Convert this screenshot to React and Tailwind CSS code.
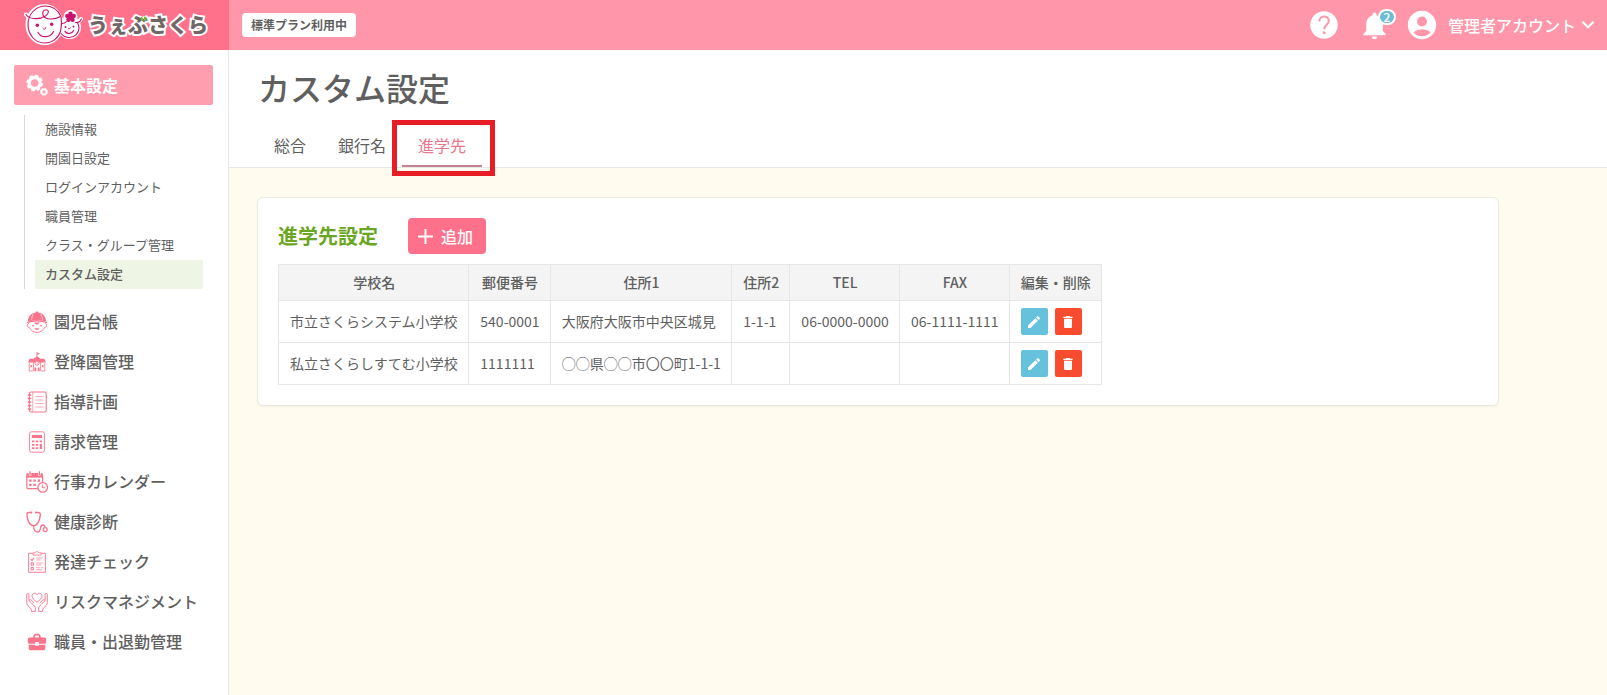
import { MdAccountCircle, MdBusinessCenter, MdDelete, MdEdit, MdNotifications } from "react-icons/md";

const subLinks = [
    { title: "施設情報" },
    { title: "開園日設定" },
    { title: "ログインアカウント" },
    { title: "職員管理" },
    { title: "クラス・グループ管理" },
    { title: "カスタム設定", active: true },
];

const menuLinks = [
    { title: "園児台帳", Icon: ChildIcon },
    { title: "登降園管理", Icon: SchoolIcon },
    { title: "指導計画", Icon: NotebookIcon },
    { title: "請求管理", Icon: CalculatorIcon },
    { title: "行事カレンダー", Icon: CalendarIcon },
    { title: "健康診断", Icon: StethoscopeIcon },
    { title: "発達チェック", Icon: ChecklistIcon },
    { title: "リスクマネジメント", Icon: HandsIcon },
    { title: "職員・出退勤管理", Icon: BriefcaseIcon },
];

const tabs = [
    { title: "総合" },
    { title: "銀行名" },
    { title: "進学先", active: true },
];

const columns = ["学校名", "郵便番号", "住所1", "住所2", "TEL", "FAX", "編集・削除"];

const schools = [
    ["市立さくらシステム小学校", "540-0001", "大阪府大阪市中央区城見", "1-1-1", "06-0000-0000", "06-1111-1111"],
    ["私立さくらしすてむ小学校", "1111111", "◯◯県◯◯市〇〇町1-1-1", "", "", ""],
];

function MenuSvg({ children }) {
    return (
        <svg viewBox="0 0 22 22" className="h-[22px] w-[22px] shrink-0" fill="none" stroke="currentColor" aria-hidden="true">
            {children}
        </svg>
    );
}

function GearsIcon() {
    return (
        <MenuSvg>
            <circle cx="8.7" cy="9" r="5.5" strokeWidth="3.4" />
            <circle cx="8.7" cy="9" r="7.3" strokeWidth="2" strokeDasharray="3.4 2.33" />
            <circle cx="18" cy="17.8" r="2.5" strokeWidth="1.8" />
            <circle cx="18" cy="17.8" r="3.5" strokeWidth="1" strokeDasharray="1.6 1.15" />
        </MenuSvg>
    );
}

function ChildIcon() {
    return (
        <MenuSvg>
            <path d="M2 10.5C2 5 5.8 1.6 11 1.6s9 3.4 9 8.9c-5-1.4-13-1.4-18 0z" fill="currentColor" stroke="none" />
            <path d="M9.7 0.6h2.6v1.6H9.7z" fill="currentColor" stroke="none" />
            <path d="M7.5 2.8C6 5 5.6 7 5.6 9.3M14.5 2.8C16 5 16.4 7 16.4 9.3" stroke="#fff" strokeWidth="0.6" />
            <path d="M0.8 11.6c5.5-2.4 14.9-2.4 20.4 0" strokeWidth="1.3" />
            <path d="M3 12.6c-2.2-.2-2.4 3.8.3 3.7C4.8 19.5 7.5 21.4 11 21.4s6.2-1.9 7.7-5.1c2.7.1 2.5-3.9.3-3.7" strokeWidth="0.9" />
            <path d="M8 11.5h6l-2 2h-2z" fill="currentColor" stroke="none" />
            <circle cx="7" cy="14.6" r="0.9" fill="currentColor" stroke="none" />
            <circle cx="15" cy="14.6" r="0.9" fill="currentColor" stroke="none" />
            <path d="M8.6 17.3h4.8c-.6 2.2-4.2 2.2-4.8 0z" fill="currentColor" stroke="none" />
        </MenuSvg>
    );
}

function SchoolIcon() {
    return (
        <MenuSvg>
            <path d="M10.9 7V1.5" strokeWidth="0.9" />
            <path d="M11.2 1.6l3 1-3 1.3z" fill="currentColor" stroke="none" />
            <path d="M2 11.4l1.6-3.6h3.9L11 5.2l3.5 2.6h3.9l1.6 3.6z" fill="currentColor" stroke="none" />
            <path d="M3.2 12v8h3.6M18.8 12v8h-3.6M7.4 11v9.2M14.6 11v9.2" strokeWidth="0.8" />
            <circle cx="11" cy="12.2" r="2.1" fill="#fff" strokeWidth="0.9" />
            <path d="M11 11.2v1.2h.9" strokeWidth="0.6" />
            <path d="M8.4 16.4h1.9v3.8H8.4zM11.7 16.4h1.9v3.8h-1.9zM4.4 14h1.5v2.2H4.4zM16.1 14h1.5v2.2h-1.5z" fill="currentColor" stroke="none" />
        </MenuSvg>
    );
}

function NotebookIcon() {
    return (
        <MenuSvg>
            <rect x="3.4" y="1" width="16.8" height="20" rx="1.8" strokeWidth="1.1" />
            <path d="M6.7 1v20" strokeWidth="0.6" />
            <path d="M1.8 4h3.4M1.8 7.5h3.4M1.8 11h3.4M1.8 14.5h3.4M1.8 18h3.4" strokeWidth="1.3" />
            <path d="M9.3 5.5h8.2M9.3 9h8.2M9.3 12.5h8.2M9.3 16h8.2" strokeWidth="0.6" />
        </MenuSvg>
    );
}

function CalculatorIcon() {
    return (
        <MenuSvg>
            <rect x="3.6" y="0.8" width="14.8" height="20.4" rx="1.8" strokeWidth="0.9" />
            <path d="M6 4h10v3H6z" fill="currentColor" stroke="none" />
            <path d="M6 10.4h2.4M9.8 10.4h2.4M13.6 10.4H16M6 13.8h2.4M9.8 13.8h2.4M6 17.2h2.4M9.8 17.2h2.4" strokeWidth="1.7" />
            <path d="M14.8 13v5" strokeWidth="2.2" />
        </MenuSvg>
    );
}

function CalendarIcon() {
    return (
        <MenuSvg>
            <path d="M12 17.6H2.2c-.8 0-1.4-.5-1.4-1.3V4c0-.8.6-1.3 1.4-1.3h13c.8 0 1.4.5 1.4 1.3v7" strokeWidth="1.2" />
            <path d="M.8 3h15.8v3.6H.8z" fill="currentColor" stroke="none" />
            <path d="M4 .6V4.400M13.400 .6V4.400" stroke="#fff" strokeWidth="2.600" />
            <path d="M4 .3v3.600M13.400 .3v3.600" strokeWidth="1.300" />
            <path d="M3.200 9.700h2.400M7.400 9.700h2.400M11.600 9.700H14M3.200 13.900h2.400M7.400 13.900h2.400" strokeWidth="2.300" />
            <circle cx="16.700" cy="16.400" r="4.800" fill="#fff" strokeWidth="1.200" />
            <path d="M16.400 13.600v3.100h2.700" strokeWidth="1" />
        </MenuSvg>
    );
}

function StethoscopeIcon() {
    return (
        <MenuSvg>
            <path d="M5.600 1.500H3C1.500 1.500.8 2.600 1 4.200c.5 4.800 2.400 10.400 6.600 10.400S13.700 9 14.300 4.200c.2-1.600-.6-2.700-2-2.700H9.600" strokeWidth="1.400" strokeLinecap="round" />
            <path d="M5.500 .5v2M9.800 .5v2" strokeWidth="1" />
            <path d="M7.600 14.600c0 4 1.300 6.500 4 6.500 4.200 0 1.700-7.100 5-7.100 1.600 0 2.200 1.300 2.400 2.600" strokeWidth="1.300" />
            <circle cx="19.200" cy="18.600" r="2" strokeWidth="1.200" />
        </MenuSvg>
    );
}

function ChecklistIcon() {
    return (
        <MenuSvg>
            <path d="M7 2.300H2.600v19h16.800v-19H15" strokeWidth="0.900" />
            <path d="M7 1.800h2.200c.3-1.600 3.300-1.600 3.600 0H15v2.300H7z" strokeWidth="0.800" />
            <path d="M4.800 8.200l1.200 1.200 2-2.400" strokeWidth="1.100" />
            <path d="M5.100 11.900h2.300v2.300H5.100zM5.100 16.500h2.300v2.300H5.100z" strokeWidth="1" />
            <path d="M10.300 7h6.700M10.300 9h4M10.300 12h6.700M10.300 14h5M10.300 16.700h3.500M15 16.700h2M10.300 18.700h6" strokeWidth="0.700" />
        </MenuSvg>
    );
}

function HandsIcon() {
    return (
        <MenuSvg>
            <path d="M11 11.200C7.800 8.700 6 7.200 6 4.900 6 2.300 9.600 1.100 11 3.800c1.400-2.700 5-1.500 5 1.100 0 2.300-1.800 3.800-5 6.300z" strokeWidth="0.900" />
            <path d="M5.300 20.400v-2.200L1.800 14.300C1 13.400.7 12.700.7 11.600V3.400c0-1.200 2.200-1.200 2.200 0v6.200l4.700 4.500c1.300 1.400 1.800 2.300 1.800 3.900v2.400zM2.900 9.600c1-1.600 2.500-.8 3.300.3l2 2.300" strokeWidth="0.900" />
            <path d="M16.700 20.400v-2.200l3.500-3.900c.8-.9 1.100-1.600 1.100-2.700V3.400c0-1.200-2.200-1.200-2.200 0v6.200l-4.700 4.500c-1.300 1.400-1.800 2.300-1.800 3.900v2.400zM19.100 9.600c-1-1.600-2.500-.8-3.300.3l-2 2.300" strokeWidth="0.900" />
        </MenuSvg>
    );
}

function BriefcaseIcon() {
    return <MdBusinessCenter className="h-[22px] w-[22px] shrink-0" aria-hidden="true" />;
}

function Faces() {
    return (
        <svg viewBox="0 0 60 44" className="h-11 w-[60px] shrink-0" fill="none" stroke="#c8146e" strokeLinecap="round" aria-hidden="true">
            <g stroke="#fff" strokeWidth="4" fill="#fff">
                <ellipse cx="20.500" cy="21.500" rx="17" ry="18.500" />
                <circle cx="45.500" cy="24.500" r="9.500" />
                <path d="M2 11.500c3 5 8 5 13 4M50 19c4 0 6-1 7-3" fill="none" />
                <circle cx="46.500" cy="14" r="5" />
            </g>
            <path d="M37 13.500C34 7 28.500 3 21.500 3 11.500 3 4 11.500 4 21.500S11 40 20.500 40c8 0 14.500-5.500 16.300-13 1-4.500.9-9 .2-13.500" strokeWidth="1.100" />
            <path d="M2 11.500c4 6 15 4.500 19.500 1.500 4-2.800 3.500-6.300.5-6.300-4.500.2-4.500 7.300 1 8.800 6 1.500 10.500-.3 13.500-2" strokeWidth="1.100" />
            <path d="M37 30.500c2 2.500 5 4 8.300 4 5.500 0 9.700-4.300 9.700-9.500 0-2-.6-3.800-1.500-5.300M51.500 19.500c3 .3 4.800-.8 5.800-3.500M38 20.500c2 0 3.500-.8 4.500-2" strokeWidth="1.100" />
            <path d="M14 29.500c3.500 6 12.500 5.500 15.500-1M41 28.500c2.500 3 7 2.500 8.700-1" strokeWidth="1.200" />
            <path d="M19 25.500c1.200 1.400 3 .6 2.800-1.200M44.500 25.500c.8.600 1.600.3 1.800-.5" strokeWidth="1" />
            <g fill="#c8146e" stroke="none">
                <circle cx="13.300" cy="22.300" r="1.700" />
                <circle cx="27.700" cy="21.300" r="1.700" />
                <circle cx="41.500" cy="24" r="1" />
                <circle cx="49.500" cy="23.500" r="1" />
                <circle cx="46.500" cy="10.700" r="2.200" />
                <circle cx="49.700" cy="13" r="2.200" />
                <circle cx="48.500" cy="16.700" r="2.200" />
                <circle cx="44.500" cy="16.700" r="2.200" />
                <circle cx="43.300" cy="13" r="2.200" />
                <circle cx="46.500" cy="14" r="2.400" />
            </g>
        </svg>
    );
}

function Logo() {
    return (
        <a href="#" className="flex h-full w-[229px] shrink-0 items-center bg-[#ff718b] pl-6">
            <Faces />
            <span className="relative ml-1 text-xl leading-6 font-black text-[#706666] [-webkit-text-stroke:4px_white] [paint-order:stroke_fill]">
                うぇぶさくら
                <svg viewBox="0 0 8 6" className="absolute top-[3px] left-[52px] h-[6px] w-2" stroke="#6fb52c" strokeWidth="2" strokeLinecap="round" aria-hidden="true">
                    <path d="M1.500 2l1 2M5 1.500l1 2" />
                </svg>
            </span>
        </a>
    );
}

function Header() {
    return (
        <header className="flex h-[50px] items-center bg-[#ff96a9] text-white">
            <Logo />
            <span className="ml-[13px] rounded bg-white px-[9px] text-xs leading-6 font-bold text-[#5f5f5f]">標準プラン利用中</span>
            <div className="ml-auto flex items-center pr-3">
                <button type="button" aria-label="ヘルプ" className="mr-5">
                    <svg viewBox="0 0 28 28" className="h-7 w-7" aria-hidden="true">
                        <circle cx="14" cy="14" r="13.700" fill="#fff" />
                        <path d="M9.300 10.600C9.300 3.800 18.800 4 18.800 10c0 3.700-4.600 4-4.600 8.200" fill="none" stroke="#ff96a9" strokeWidth="2" />
                        <circle cx="14.200" cy="21.800" r="1.500" fill="#ff96a9" />
                    </svg>
                </button>
                <button type="button" aria-label="お知らせ" className="relative">
                    <MdNotifications className="h-[33px] w-[33px]" />
                    <span className="absolute top-0 left-5 flex h-4 w-[18px] items-center justify-center rounded-full border-2 border-white bg-[#6cbcd3] text-xs leading-3 font-medium">2</span>
                </button>
                <button type="button" className="ml-[14px] flex items-center gap-[5px]">
                    <MdAccountCircle className="mr-1 h-[34px] w-[34px]" />
                    <span className="text-base font-medium">管理者アカウント</span>
                    <svg viewBox="0 0 14 10" className="h-[10px] w-[14px]" fill="none" stroke="currentColor" strokeWidth="2.200" aria-hidden="true">
                        <path d="M1.500 1.800L7 7.300l5.500-5.500" />
                    </svg>
                </button>
            </div>
        </header>
    );
}

function Sidebar() {
    return (
        <nav className="w-[229px] shrink-0 border-r border-[#e8e8e8] bg-white pt-[15px] pr-[15px] pl-[14px]">
            <a href="#" className="flex h-10 items-center gap-[6px] rounded-xs bg-[#ff9eaf] pl-3 font-bold text-white">
                <GearsIcon />
                基本設定
            </a>
            <ul className="mt-[10px] mb-[13px] ml-[10px] border-l border-[#d8d8d8] px-[10px] text-[13px] leading-[27px]">
                {subLinks.map(({ title, active }) => (
                    <li key={title}>
                        <a href="#" className={`block rounded-xs pb-[2px] pl-[10px] ${active ? "bg-[#eff5e4] font-medium" : ""}`}>
                            {title}
                        </a>
                    </li>
                ))}
            </ul>
            <ul>
                {menuLinks.map(({ title, Icon }) => (
                    <li key={title}>
                        <a href="#" className="flex h-10 items-center gap-[6px] pl-3 font-medium whitespace-nowrap">
                            <span className="text-[#f9738a]"><Icon /></span>
                            <span className="pb-[2px]">{title}</span>
                        </a>
                    </li>
                ))}
            </ul>
        </nav>
    );
}

function Tabs() {
    return (
        <div className="flex">
            {tabs.map(({ title, active }) => (
                <a
                    key={title}
                    href="#"
                    className={`relative border-b-2 px-4 pt-[7px] pb-2 leading-6 ${active ? "border-[#c77f92] text-[#e9768c]" : "border-transparent"}`}
                >
                    {title}
                    {active && <span className="absolute -top-[6px] -left-[10px] h-14 w-[103px] border-[5px] border-[#e81c24]" />}
                </a>
            ))}
        </div>
    );
}

function SchoolTable() {
    return (
        <table className="min-w-[824px] border-collapse text-sm whitespace-nowrap">
            <thead className="bg-[#f4f4f4]">
                <tr className="h-9">
                    {columns.map((title) => (
                        <th key={title} className="border border-[#e6e6e6] pr-[10px] pb-[2px] pl-[11px] font-medium">{title}</th>
                    ))}
                </tr>
            </thead>
            <tbody>
                {schools.map((school) => (
                    <tr key={school[0]} className="h-[42px]">
                        {school.map((value, i) => (
                            <td key={`c_${i}`} className="border border-[#e6e6e6] pr-[10px] pb-[2px] pl-[11px]">{value}</td>
                        ))}
                        <td className="border border-[#e6e6e6] pr-[10px] pl-[11px]">
                            <div className="flex gap-[7px] text-white">
                                <button type="button" aria-label="編集" className="flex h-[27px] w-[27px] items-center justify-center rounded-xs bg-[#66c1dc]">
                                    <MdEdit className="h-4 w-4" />
                                </button>
                                <button type="button" aria-label="削除" className="flex h-[27px] w-[27px] items-center justify-center rounded-xs bg-[#f94b2e]">
                                    <MdDelete className="h-4 w-4" />
                                </button>
                            </div>
                        </td>
                    </tr>
                ))}
            </tbody>
        </table>
    );
}

export default function App() {
    return (
        <div className="flex min-h-screen flex-col bg-[#fffbee] font-['Noto_Sans_CJK_JP',sans-serif] text-[#5f5f5f]">
            <Header />
            <div className="flex grow">
                <Sidebar />
                <main className="min-w-0 grow">
                    <div className="border-b border-[#e8e8e8] bg-white pt-[14px] pl-[29px]">
                        <h1 className="mb-4 text-[32px] leading-[46px] font-medium">カスタム設定</h1>
                        <Tabs />
                    </div>
                    <section className="mt-[29px] mr-[108px] ml-7 rounded-md border border-[#ebe9e0] bg-white p-5 shadow-xs">
                        <div className="mb-[10px] flex items-center gap-[30px]">
                            <h2 className="text-xl font-bold text-[#6ba524]">進学先設定</h2>
                            <button type="button" className="flex h-9 items-center gap-2 rounded bg-[#ff718b] pr-[13px] pl-[10px] font-medium text-white">
                                <svg viewBox="0 0 15 15" className="h-[15px] w-[15px]" stroke="currentColor" strokeWidth="2" aria-hidden="true">
                                    <path d="M7.500 0v15M0 7.500h15" />
                                </svg>
                                追加
                            </button>
                        </div>
                        <SchoolTable />
                    </section>
                </main>
            </div>
        </div>
    );
}
